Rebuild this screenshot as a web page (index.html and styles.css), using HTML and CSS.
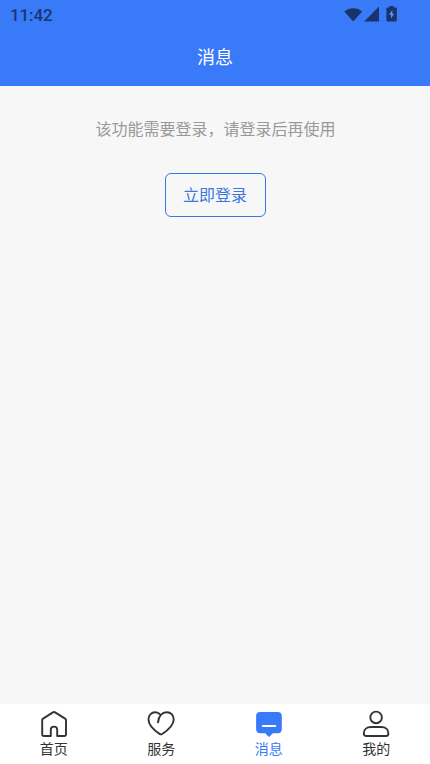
FILE: index.html
```html
<!DOCTYPE html>
<html lang="zh-CN">
<head>
  <meta charset="UTF-8">
  <meta name="viewport" content="width=device-width, initial-scale=1.0">
  <title>消息</title>
  <link rel="stylesheet" href="styles.css">
</head>
<body>

  <header class="header">
    <div class="status-bar">
      <span class="time">11:42</span>
      <svg class="status-icons" width="54" height="18" viewBox="0 0 54 18">
        <path d="M0.3 7.6 C5 3 13.5 3 18.2 7.6 L9.2 17.4 Z"/>
        <path d="M20.2 17.4 L35 2.6 V17.4 Z"/>
        <path d="M45.3 2 h4.4 v1.5 h2 q1.1 0 1.1 1.1 v11.6 q0 1.2-1.1 1.2 h-8.2 q-1.1 0-1.1-1.2 v-11.6 q0-1.1 1.1-1.1 h1.8 z"/>
        <path class="bolt" d="M48.3 6 L45 10.7 H47 V14.5 L50.2 9.8 H48.3 Z"/>
      </svg>
    </div>
    <h1 class="title">消息</h1>
  </header>

  <main class="content">
    <p class="tip">该功能需要登录，请登录后再使用</p>
    <button class="login-btn" type="button">立即登录</button>
  </main>

  <nav class="tabbar">
    <a class="tab">
      <svg class="tab-icon" width="28" height="28" viewBox="0 0 28 28">
        <path d="M10.8 26 H4 Q2.2 26 2.2 24.2 V10.2 Q2.2 9.2 3.1 8.6 L12.9 2.4 Q14 1.7 15.1 2.4 L25.1 8.6 Q26 9.2 26 10.2 V24.2 Q26 26 24.2 26 H17.2 V19.5 Q17.2 16.6 14 16.6 Q10.8 16.6 10.8 19.5 Z"/>
      </svg>
      <span>首页</span>
    </a>
    <a class="tab">
      <svg class="tab-icon" width="28" height="28" viewBox="0 0 28 28">
        <path d="M11 12.4 C11.5 6 15.2 2.3 19.7 2.3 C24.2 2.3 26.9 5.6 26.7 9.8 C26.4 16.2 18.9 21.6 15.2 24 Q13.9 24.8 12.6 23.9 C7.8 20.8 1.5 15.5 1.5 9.6 C1.5 4.7 4.8 2.3 8 2.3 Q10.7 2.3 12.6 4"/>
      </svg>
      <span>服务</span>
    </a>
    <a class="tab active">
      <svg class="tab-icon" width="28" height="28" viewBox="0 0 28 28">
        <path class="bubble" d="M5.3 2 H22.6 Q26.8 2 26.8 6.2 V19 Q26.8 23.2 22.6 23.2 H17.8 L14.7 26.4 Q14 27 13.3 26.4 L10.3 23.2 H5.3 Q1.1 23.2 1.1 19 V6.2 Q1.1 2 5.3 2 Z"/>
        <path class="dash" d="M7.8 16 H20.3"/>
      </svg>
      <span>消息</span>
    </a>
    <a class="tab">
      <svg class="tab-icon" width="28" height="28" viewBox="0 0 28 28">
        <circle cx="14.1" cy="7.4" r="5.8"/>
        <path d="M9.2 17 H19 C23.5 17 26.4 19.5 26.4 23.4 Q26.4 26 23.8 26 H4.4 Q1.8 26 1.8 23.4 C1.8 19.5 4.7 17 9.2 17 Z"/>
      </svg>
      <span>我的</span>
    </a>
  </nav>

</body>
</html>
```

FILE: styles.css
```css
* {
  box-sizing: border-box;
}

body {
  margin: 0;
  height: 764px;
  display: flex;
  flex-direction: column;
  background: #f7f7f7;
  font-family: "Noto Sans CJK SC", sans-serif;
}

.header {
  height: 86px;
  background: #387af7;
}

.status-bar {
  height: 30px;
  padding: 0 32px 0 10px;
  display: flex;
  justify-content: space-between;
  align-items: center;
}

.time {
  color: #18376f;
  font-family: Roboto, sans-serif;
  font-size: 17px;
  font-weight: 500;
  letter-spacing: -0.1px;
}

.status-icons {
  margin-top: -4px;
  fill: #18346a;
}

.status-icons .bolt {
  fill: #5b95f7;
}

.title {
  margin: 0;
  line-height: 53px;
  text-align: center;
  color: #fff;
  font-size: 18px;
  font-weight: 400;
}

.content {
  flex: 1;
  display: flex;
  flex-direction: column;
  align-items: center;
  padding-top: 30px;
}

.tip {
  margin: 0 0 33px;
  padding-left: 1px;
  color: #999;
  font-size: 16px;
  line-height: 24px;
}

.login-btn {
  width: 101px;
  height: 44px;
  padding: 0 0 2px;
  border: 1px solid #3a77de;
  border-radius: 6px;
  background: none;
  color: #3a77de;
  font-family: inherit;
  font-size: 16px;
}

.tabbar {
  height: 60px;
  display: flex;
  background: #fff;
}

.tab {
  flex: 1;
  display: flex;
  flex-direction: column;
  align-items: center;
  padding-top: 6px;
  color: #333;
  font-size: 14px;
  line-height: 20px;
}

.tab-icon {
  fill: none;
  stroke: #333;
  stroke-width: 1.9;
  stroke-linecap: round;
  stroke-linejoin: round;
}

.active {
  color: #387af7;
}

.bubble {
  fill: #387af7;
  stroke: none;
}

.dash {
  stroke: #fff;
}
```
